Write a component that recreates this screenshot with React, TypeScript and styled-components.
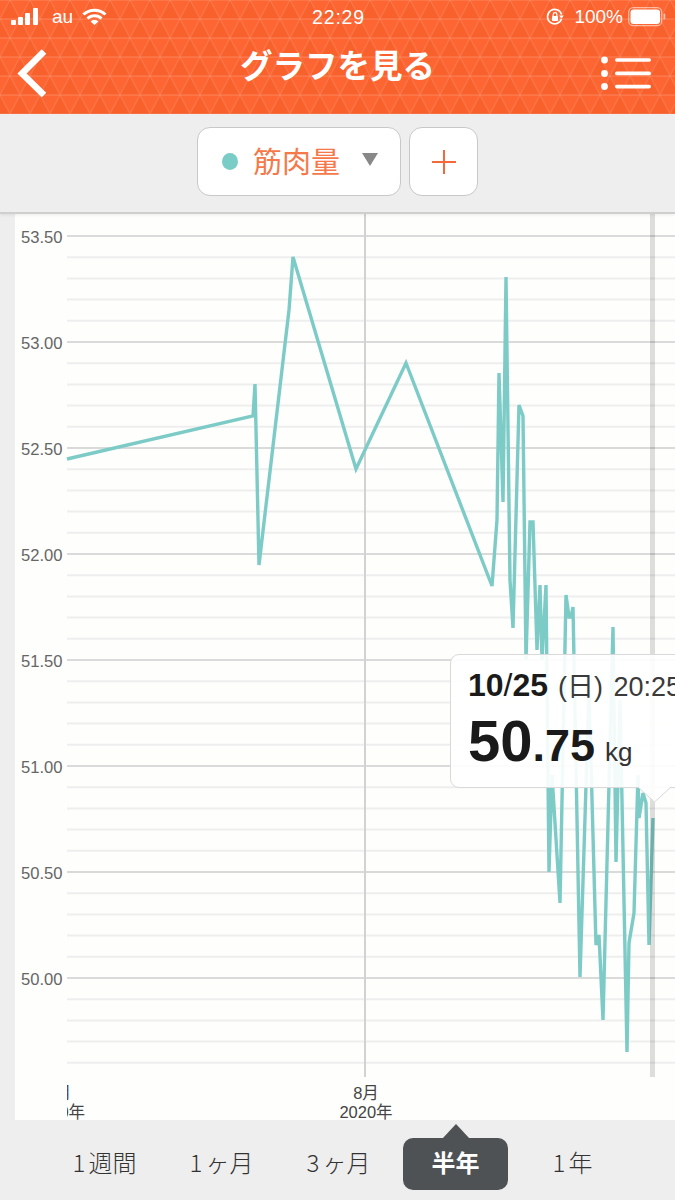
import React from "react";
import styled, { createGlobalStyle } from "styled-components";

const Global = createGlobalStyle`
  html, body { margin: 0; padding: 0; background: #eeeeee; }
  body { width: 675px; height: 1200px; overflow: hidden; font-family: "Liberation Sans", "Noto Sans CJK JP", sans-serif; }
`;

const Page = styled.div`
  width: 675px;
  height: 1200px;
  display: flex;
  flex-direction: column;
  overflow: hidden;
  background: #eeeeee;
`;

const Header = styled.header`
  position: relative;
  height: 114px;
  flex: none;
  display: flex;
  flex-direction: column;
  background: #fd6632;
  color: #fff;
`;

const Pattern = styled.svg`
  position: absolute;
  inset: 0;
`;

const StatusBar = styled.div`
  position: relative;
  height: 34px;
  display: grid;
  grid-template-columns: 1fr auto 1fr;
  align-items: center;
  padding: 0 9px 0 11px;
`;

const StatusLeft = styled.div`
  display: flex;
  align-items: center;
`;

const StatusRight = styled.div`
  display: flex;
  align-items: center;
  justify-content: flex-end;
`;

const Carrier = styled.span`
  font-size: 19px;
  margin: 0 9px 0 13px;
`;

const Clock = styled.span`
  font-size: 19.5px;
  letter-spacing: 0.8px;
`;

const Percent = styled.span`
  font-size: 19px;
  margin: 0 5px 0 10px;
`;

const Nav = styled.div`
  position: relative;
  flex: 1;
  display: grid;
  grid-template-columns: 1fr auto 1fr;
  align-items: center;
  padding: 0 24px 3px 17px;
`;

const Title = styled.h1`
  margin: 0 0 17px 7px;
  font: 700 32.5px "Noto Sans CJK JP", sans-serif;
  line-height: 44px;
  color: #fff;
`;

const MenuIcon = styled.svg`
  justify-self: end;
`;

const Toolbar = styled.div`
  height: 100px;
  flex: none;
  display: flex;
  justify-content: center;
  align-items: flex-start;
  gap: 8px;
  padding-top: 13px;
  box-sizing: border-box;
  background: #eeeeee;
  border-bottom: 2px solid #cfcfcf;
  box-shadow: 0 1px 3px rgba(0, 0, 0, 0.08);
  position: relative;
  z-index: 1;
`;

const SelectButton = styled.div`
  width: 204px;
  height: 69px;
  box-sizing: border-box;
  background: #fff;
  border: 1.5px solid #c8c8c8;
  border-radius: 13px;
  display: flex;
  align-items: center;
  padding-left: 24px;
`;

const Dot = styled.span`
  width: 16px;
  height: 17px;
  border-radius: 50%;
  background: #7accc6;
  flex: none;
`;

const SelectLabel = styled.span`
  margin: -4px 0 0 15px;
  font: 400 29px "Noto Sans CJK JP", sans-serif;
  line-height: 40px;
  color: #f5794a;
  width: 87px;
  white-space: nowrap;
`;

const Caret = styled.span`
  margin: -5px 0 0 22px;
  width: 0;
  height: 0;
  border-left: 8px solid transparent;
  border-right: 8px solid transparent;
  border-top: 13px solid #888;
`;

const PlusButton = styled.div`
  width: 69px;
  height: 69px;
  box-sizing: border-box;
  background: #fff;
  border: 1.5px solid #c8c8c8;
  border-radius: 13px;
  display: flex;
  align-items: center;
  justify-content: center;
`;

const ChartPanel = styled.main`
  position: relative;
  height: 906px;
  flex: none;
  margin-left: 15px;
  background: #fefefd;
  overflow: hidden;
`;

const ChartSvg = styled.svg`
  display: block;
`;

const Tooltip = styled.div`
  position: absolute;
  left: 435px;
  top: 440px;
  width: 270px;
  height: 134px;
  box-sizing: border-box;
  padding: 10px 0 0 17px;
  background: rgba(255, 255, 255, 0.91);
  border: 1px solid #d9d9d9;
  border-radius: 9px;
  color: #1a1a1a;
  white-space: nowrap;
`;

const TooltipTail = styled.svg`
  position: absolute;
  left: 186px;
  top: 131px;
`;

const DateLine = styled.div`
  font-size: 32px;
  line-height: 40px;
  font-weight: 700;
`;

const Slash = styled.span`
  font-weight: 400;
`;

const Weekday = styled.span`
  font-weight: 400;
  font-size: 27px;
  color: #3a3a3a;
  margin: 0 3px 0 10px;
`;

const Time = styled.span`
  font-weight: 400;
  font-size: 27px;
  color: #3a3a3a;
`;

const ValueLine = styled.div`
  display: flex;
  align-items: baseline;
  line-height: 68px;
  font-weight: 700;
`;

const BigNum = styled.span`
  font-size: 58px;
`;

const MidNum = styled.span`
  font-size: 45px;
`;

const Unit = styled.span`
  font-size: 26px;
  font-weight: 400;
  color: #333;
  margin-left: 10px;
`;

const Tabs = styled.nav`
  flex: 1;
  display: grid;
  grid-template-columns: repeat(5, 117px);
  padding: 18px 44px 0 46px;
  align-items: start;
`;

const Tab = styled.div<{ $active?: boolean }>`
  position: relative;
  height: 52px;
  box-sizing: border-box;
  padding-bottom: 5px;
  display: flex;
  align-items: center;
  justify-content: center;
  font: ${(p) => (p.$active ? 700 : 300)} 24px "Noto Sans CJK JP", sans-serif;
  color: ${(p) => (p.$active ? "#fff" : "#333")};
  background: ${(p) => (p.$active ? "#4f5254" : "transparent")};
  border-radius: ${(p) => (p.$active ? "10px" : "0")};
  margin: ${(p) => (p.$active ? "0 6px" : "0")};
  ${(p) =>
    p.$active
      ? `&::before {
          content: "";
          position: absolute;
          left: 50%;
          top: -14px;
          margin-left: -14px;
          border-left: 14px solid transparent;
          border-right: 14px solid transparent;
          border-bottom: 15px solid #4f5254;
        }`
      : ""}
`;

const TabOne = styled.span`
  margin-right: 3px;
`;

const points: [number, number][] = [
  [67, 459], [253, 416], [255, 384], [259, 565], [289, 310], [293, 257], [356, 469], [406, 363],
  [492, 586], [497, 520], [499, 373], [503, 502], [506, 277], [510, 580], [513, 628], [519, 405],
  [523, 416], [526, 660], [530, 522], [533, 522], [537, 650], [540, 585], [542, 660], [546, 585],
  [549, 872], [552, 775], [560, 903], [566, 595], [569, 617], [571, 617], [573, 607], [580, 977],
  [589, 690], [596, 945], [599, 935], [603, 1020], [613, 627], [616, 862], [620, 700], [627, 1052],
  [629, 943], [634, 913], [638, 775], [639, 818], [643, 793], [646, 803], [649, 945], [653, 818],
];

const yLabels = ["53.50", "53.00", "52.50", "52.00", "51.50", "51.00", "50.50", "50.00"];
const minorLines = Array.from({ length: 40 }, (_, i) => i);

const AxisText = ({ x, y, children }: { x: number; y: number; children: React.ReactNode }) => (
  <text x={x} y={y} textAnchor="middle" fontSize="16.5" fill="#444" fontFamily='"Liberation Sans", "Noto Sans CJK JP", sans-serif'>
    {children}
  </text>
);

export default function App() {
  return (
    <>
      <Global />
      <Page>
        <Header>
          <Pattern width="675" height="114">
            <defs>
              <pattern id="tri" x="0" y="0" width="20" height="38" patternUnits="userSpaceOnUse">
                <path d="M10 0L20 19H0Z" fill="rgba(232,72,20,0.2)" />
                <path d="M0 19L10 38H-10Z M20 19L30 38H10Z" fill="rgba(232,72,20,0.2)" />
                <path d="M0 19L10 0L20 19L10 38Z" fill="none" stroke="rgba(255,255,255,0.1)" strokeWidth="1.4" />
                <path d="M0 19H20M0 0H20M0 38H20" fill="none" stroke="rgba(255,255,255,0.1)" strokeWidth="2" />
              </pattern>
            </defs>
            <rect width="675" height="114" fill="url(#tri)" />
          </Pattern>
          <StatusBar>
            <StatusLeft>
              <svg width="28" height="18" viewBox="0 0 28 18" fill="#fff">
                <rect x="0" y="12" width="5" height="5" rx="1" />
                <rect x="7" y="9" width="5" height="8" rx="1" />
                <rect x="14" y="5" width="5" height="12" rx="1" />
                <rect x="22" y="0" width="5" height="17" rx="1" />
              </svg>
              <Carrier>au</Carrier>
              <svg width="25" height="18" viewBox="0 0 25 18" fill="none" stroke="#fff" strokeWidth="3">
                <path d="M1.5 6.5C7.5 .7 17.5 .7 23.5 6.5" />
                <path d="M5.5 10.5C9.5 6.7 15.5 6.7 19.5 10.5" />
                <path d="M12.5 17L8.6 13.4C10.8 11.6 14.2 11.6 16.4 13.4Z" fill="#fff" stroke="none" />
              </svg>
            </StatusLeft>
            <Clock>22:29</Clock>
            <StatusRight>
              <svg width="18" height="18" viewBox="0 0 18 18" fill="none" stroke="#fff" strokeWidth="1.6">
                <path d="M15.5 11A7.2 7.2 0 1 1 15.6 6.5" />
                <path d="M13.2 7.6h4.6l-2.3 3.2z" fill="#fff" stroke="none" />
                <rect x="6" y="8" width="6" height="5" rx="0.8" fill="#fff" stroke="none" />
                <path d="M7.2 8V6.4a1.8 1.8 0 0 1 3.6 0V8" strokeWidth="1.2" />
              </svg>
              <Percent>100%</Percent>
              <svg width="38" height="20" viewBox="0 0 38 20">
                <rect x="0.7" y="0.7" width="33" height="18" rx="4.5" fill="none" stroke="rgba(255,255,255,0.55)" strokeWidth="1.3" />
                <rect x="2.5" y="2.5" width="29.5" height="14.5" rx="3" fill="#fff" />
                <rect x="35.5" y="6.5" width="1.8" height="6" rx="0.9" fill="rgba(255,255,255,0.6)" />
              </svg>
            </StatusRight>
          </StatusBar>
          <Nav>
            <svg width="32" height="48" viewBox="0 0 32 48" fill="none" stroke="#fff" strokeWidth="6.5">
              <path d="M27 2.5L5 24.5L27 46" />
            </svg>
            <Title>グラフを見る</Title>
            <MenuIcon width="50" height="34" viewBox="0 0 50 34" fill="#fff">
              <circle cx="3.5" cy="4" r="3.4" />
              <circle cx="3.5" cy="17.5" r="3.4" />
              <circle cx="3.5" cy="30.5" r="3.4" />
              <rect x="14" y="2.2" width="36" height="3.6" rx="1.8" />
              <rect x="14" y="15.6" width="36" height="3.6" rx="1.8" />
              <rect x="14" y="28.8" width="36" height="3.6" rx="1.8" />
            </MenuIcon>
          </Nav>
        </Header>

        <Toolbar>
          <SelectButton>
            <Dot />
            <SelectLabel>筋肉量</SelectLabel>
            <Caret />
          </SelectButton>
          <PlusButton>
            <svg width="24" height="24" viewBox="0 0 24 24" stroke="#f4683a" strokeWidth="2">
              <path d="M0 12H24M12 0V24" />
            </svg>
          </PlusButton>
        </Toolbar>

        <ChartPanel>
          <ChartSvg width="660" height="906" viewBox="15 214 660 906">
            <defs>
              <clipPath id="axisClip">
                <rect x="67" y="1070" width="60" height="60" />
              </clipPath>
            </defs>
            {minorLines.map((i) => {
              const y = 236 + i * 21.2;
              const major = i % 5 === 0;
              return <line key={i} x1="67" x2="675" y1={y} y2={y} stroke={major ? "#dadada" : "#eeeeee"} strokeWidth="2" />;
            })}
            {yLabels.map((label, i) => (
              <text key={label} x="21" y={242.5 + i * 106} fontSize="16.6" fill="#666" fontFamily='"Liberation Sans", sans-serif'>
                {label}
              </text>
            ))}
            <line x1="365" x2="365" y1="214" y2="1077" stroke="#d2d2d2" strokeWidth="2" />
            <polyline
              points={points.map((p) => p.join(",")).join(" ")}
              fill="none"
              stroke="#7dcbc6"
              strokeWidth="3.4"
              strokeLinejoin="miter"
            />
            <line x1="652.5" x2="652.5" y1="214" y2="1077" stroke="rgba(0,0,0,0.13)" strokeWidth="5" />
            <g clipPath="url(#axisClip)">
              <AxisText x={58.5} y={1099}>7月</AxisText>
              <AxisText x={58.5} y={1118}>2020年</AxisText>
            </g>
            <AxisText x={366} y={1099}>8月</AxisText>
            <AxisText x={366} y={1118}>2020年</AxisText>
          </ChartSvg>
          <Tooltip>
            <DateLine>
              10<Slash>/</Slash>25<Weekday>(日)</Weekday><Time> 20:25</Time>
            </DateLine>
            <ValueLine>
              <BigNum>50</BigNum>
              <MidNum>.75</MidNum>
              <Unit>kg</Unit>
            </ValueLine>
            <TooltipTail width="36" height="18" viewBox="0 0 36 18">
              <path d="M1 1L17.5 16L34 1" fill="rgba(255,255,255,0.91)" stroke="#d9d9d9" strokeWidth="1" />
            </TooltipTail>
          </Tooltip>
        </ChartPanel>

        <Tabs>
          <Tab><TabOne>1</TabOne>週間</Tab>
          <Tab><TabOne>1</TabOne>ヶ月</Tab>
          <Tab><TabOne>3</TabOne>ヶ月</Tab>
          <Tab $active>半年</Tab>
          <Tab><TabOne>1</TabOne>年</Tab>
        </Tabs>
      </Page>
    </>
  );
}
